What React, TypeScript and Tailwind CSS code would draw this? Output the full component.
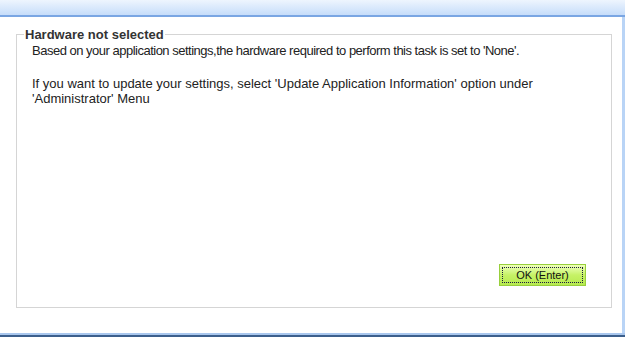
export default function App() {
  return (
    <div className="w-[625px] h-[337px] flex flex-col bg-white overflow-hidden" style={{ fontFamily: '"Liberation Sans", Arial, sans-serif' }}>
      <div className="h-[17px] bg-gradient-to-b from-[#eef5fe] to-[#c6ddfa] border-b-2 border-[#7aa6e3] shrink-0" />
      <div className="flex-1 flex">
        <div className="flex-1 pl-[16px] pr-[10px] pt-[10px] pb-[25px] flex">
          <fieldset className="flex-1 border border-[#d5d5d5] pl-[15px] pr-[12px] pt-0 pb-[21px] m-0 flex flex-col min-w-0">
            <legend className="ml-[-8px] px-[1px] text-[13px] font-bold text-[#333] leading-[15px]">Hardware not selected</legend>
            <div className="text-[13px] leading-[15px] text-[#222] mt-[1px]">
              <p className="tracking-[-0.5px]">Based on your application settings,the hardware required to perform this task is set to 'None'.</p>
              <p className="mt-[18px]">If you want to update your settings, select 'Update Application Information' option under<br />'Administrator' Menu</p>
            </div>
            <div className="flex-1" />
            <div className="flex justify-end pr-[13px]">
              <button className="w-[87px] h-[22px] border border-[#98cf3c] bg-gradient-to-b from-[#eeffb8] via-[#c6f266] to-[#b6ea4e] p-[2px]">
                <span className="block w-full h-full border border-dotted border-[#1a1a40] text-[11px] leading-[14px] text-[#111] flex items-center justify-center">OK (Enter)</span>
              </button>
            </div>
          </fieldset>
        </div>
        <div className="w-[3px] bg-[#b9d4f6]" />
      </div>
      <div className="h-[2px] bg-[#a9c7ee] shrink-0" />
      <div className="h-[2px] bg-[#3c5f8c] shrink-0" />
    </div>
  );
}
